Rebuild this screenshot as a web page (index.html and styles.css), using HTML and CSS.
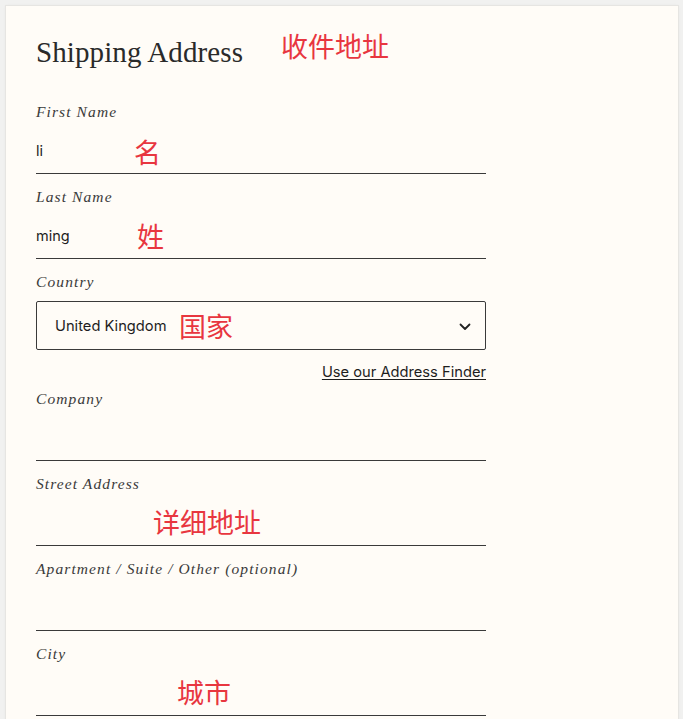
FILE: index.html
```html
<!DOCTYPE html>
<html lang="en">
<head>
<meta charset="utf-8">
<title>Shipping Address</title>
<link rel="stylesheet" href="styles.css">
</head>
<body>
<main class="card">
  <div class="head">
    <h1 class="title">Shipping Address</h1>
    <span class="note note-title">收件地址</span>
  </div>
  <form class="form">
    <div class="field">
      <div class="label">First Name</div>
      <div class="input">li</div>
      <span class="note note-first">名</span>
    </div>
    <div class="field">
      <div class="label">Last Name</div>
      <div class="input">ming</div>
      <span class="note note-last">姓</span>
    </div>
    <div class="field field-select">
      <div class="label">Country</div>
      <div class="select">
        <span>United Kingdom</span>
        <svg class="chev" width="12" height="8" viewBox="0 0 12 8"><path d="M1.5 1.5 L6 6 L10.5 1.5" fill="none" stroke="#222" stroke-width="1.8" stroke-linecap="round" stroke-linejoin="round"/></svg>
      </div>
      <span class="note note-country">国家</span>
    </div>
    <div class="finder"><a href="#">Use our Address Finder</a></div>
    <div class="field">
      <div class="label">Company</div>
      <div class="input"></div>
    </div>
    <div class="field">
      <div class="label">Street Address</div>
      <div class="input"></div>
      <span class="note note-street">详细地址</span>
    </div>
    <div class="field">
      <div class="label">Apartment / Suite / Other (optional)</div>
      <div class="input"></div>
    </div>
    <div class="field">
      <div class="label">City</div>
      <div class="input"></div>
      <span class="note note-city">城市</span>
    </div>
  </form>
</main>
</body>
</html>
```
FILE: styles.css
```css
html, body {
  margin: 0;
  padding: 0;
}
body {
  background: #f1f1f0;
  font-family: "Inter", "Liberation Sans", sans-serif;
  color: #222;
  overflow: hidden;
}
.card {
  margin: 6px 0 0 6px;
  width: 672px;
  min-height: 760px;
  box-sizing: border-box;
  background: #fffcf7;
  box-shadow: 0 0 0 1px #e6e5e2, 0 0 3px rgba(0,0,0,0.08);
  padding: 29px 0 0 30px;
}
.head {
  position: relative;
  width: 450px;
}
.title {
  margin: 0;
  font-family: "Liberation Serif", "DejaVu Serif", serif;
  font-weight: normal;
  font-size: 29px;
  line-height: 34px;
  color: #2a2a2a;
  letter-spacing: 0.1px;
}
.form {
  margin-top: 33px;
  width: 450px;
}
.field {
  position: relative;
  margin-bottom: 13px;
}
.label {
  font-family: "Liberation Serif", "DejaVu Serif", serif;
  font-style: italic;
  font-size: 15.5px;
  line-height: 20px;
  letter-spacing: 1.1px;
  color: #3a3a3a;
}
.input {
  height: 52px;
  box-sizing: border-box;
  border-bottom: 1px solid #3a3a3a;
  padding-top: 18px;
  font-size: 14.5px;
  line-height: 22px;
  color: #1e1e1e;
}
.field-select {
  margin-bottom: 0;
}
.select {
  margin-top: 9px;
  height: 49px;
  box-sizing: border-box;
  border: 1px solid #3a3a3a;
  border-radius: 2px;
  display: flex;
  align-items: center;
  justify-content: space-between;
  padding: 0 14px 0 18px;
  font-size: 14.7px;
  color: #1e1e1e;
}
.chev {
  margin-top: 3px;
}
.finder {
  margin-top: 11px;
  margin-bottom: 7px;
  text-align: right;
  line-height: 20px;
}
.finder a {
  color: #1e1e1e;
  font-size: 14.7px;
  text-decoration: underline;
  text-underline-offset: 2px;
}
.note {
  position: absolute;
  font-family: "Noto Sans CJK SC", sans-serif;
  font-size: 27px;
  line-height: 30px;
  color: #e8363f;
  white-space: nowrap;
}
.note-title { left: 245px; top: -4px; }
.note-first { left: 98px; top: 35px; }
.note-last { left: 101px; top: 34px; }
.note-country { left: 143px; top: 39px; }
.note-street { left: 117px; top: 33px; }
.note-city { left: 141px; top: 33px; }
```
